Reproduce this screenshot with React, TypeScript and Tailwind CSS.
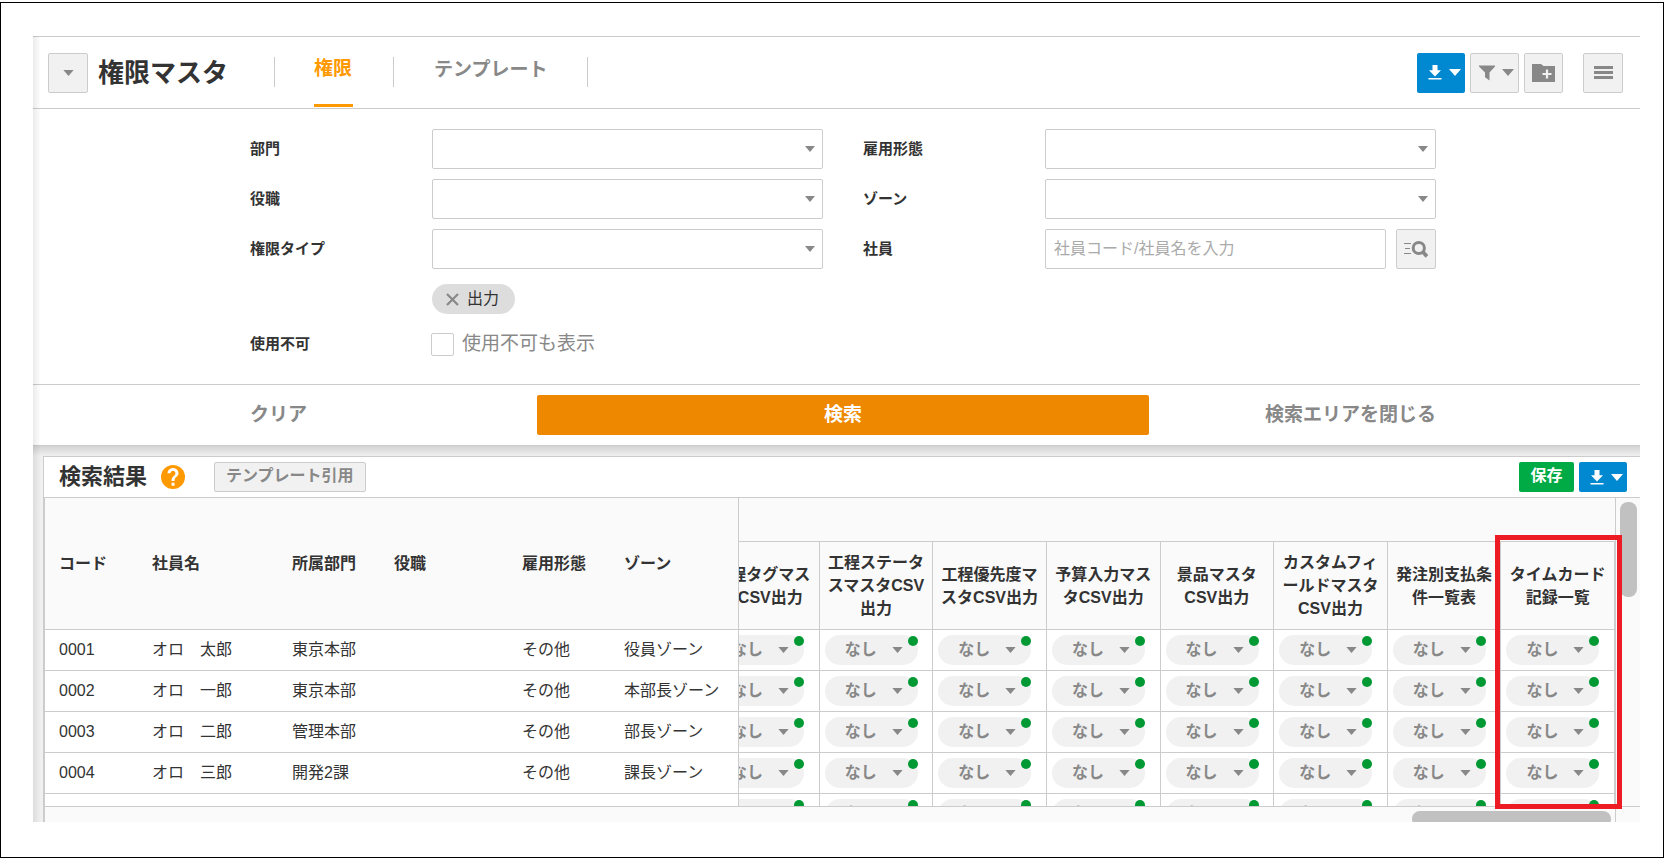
import React from 'react';

const line = 'border-[#cccccc]';

function Caret({ className = '' }: { className?: string }) {
  return (
    <svg viewBox="0 0 12 7" className={className} fill="currentColor" aria-hidden="true">
      <path d="M0 0h12L6 7z" />
    </svg>
  );
}

function DownloadIcon() {
  return (
    <svg viewBox="0 0 14 15" className="h-[15px] w-[14px]" fill="currentColor" aria-hidden="true">
      <path d="M4.5 0h5v5.2H13L7 11.5 1 5.2h3.5zM0.5 13h13v1.6h-13z" />
    </svg>
  );
}

function DownloadButton({ className }: { className: string }) {
  return (
    <button
      type="button"
      aria-label="ダウンロード"
      className={`flex w-12 items-center justify-center gap-[7px] rounded-[2px] bg-[#0088d0] pl-1.5 text-white ${className}`}
    >
      <DownloadIcon />
      <Caret className="h-[7px] w-3" />
    </button>
  );
}

function Field({ id, label, children }: { id: string; label: string; children: React.ReactNode }) {
  return (
    <div className="flex items-center">
      <label htmlFor={id} className="w-[182px] shrink-0 text-[15px] leading-5 font-bold">
        {label}
      </label>
      <div className="flex min-w-0 flex-1 items-center gap-2.5">{children}</div>
    </div>
  );
}

function SelectField({ id, label }: { id: string; label: string }) {
  return (
    <Field id={id} label={label}>
      <div className="relative w-full">
        <select id={id} className={`block h-10 w-full appearance-none rounded-[2px] border ${line} bg-white px-2.5`}>
          <option value="" />
        </select>
        <Caret className="pointer-events-none absolute top-[17px] right-2 h-1.5 w-2.5 text-[#888888]" />
      </div>
    </Field>
  );
}

const employeeColumns = [
  { name: 'コード', width: 'w-[93px]' },
  { name: '社員名', width: 'w-[140px]' },
  { name: '所属部門', width: 'w-[102px]' },
  { name: '役職', width: 'w-[128px]' },
  { name: '雇用形態', width: 'w-[102px]' },
  { name: 'ゾーン', width: 'w-[129px]' },
];

const employees = [
  ['0001', 'オロ　太郎', '東京本部', '', 'その他', '役員ゾーン'],
  ['0002', 'オロ　一郎', '東京本部', '', 'その他', '本部長ゾーン'],
  ['0003', 'オロ　二郎', '管理本部', '', 'その他', '部長ゾーン'],
  ['0004', 'オロ　三郎', '開発2課', '', 'その他', '課長ゾーン'],
  ['', '', '', '', '', ''],
];

const permissionColumns = [
  '工程タグマス\nタCSV出力',
  '工程ステータ\nスマスタCSV\n出力',
  '工程優先度マ\nスタCSV出力',
  '予算入力マス\nタCSV出力',
  '景品マスタ\nCSV出力',
  'カスタムフィ\nールドマスタ\nCSV出力',
  '発注別支払条\n件一覧表',
  'タイムカード\n記録一覧',
];

function PermissionSelect({ label }: { label: string }) {
  return (
    <div className="relative ml-[5px] h-[30px] w-[93px]">
      <select
        aria-label={label}
        className="block h-[30px] w-full appearance-none rounded-full bg-[#f1f1f1] pl-5 text-[16px] leading-[30px] font-bold text-[#888888]"
      >
        <option>なし</option>
      </select>
      <Caret className="pointer-events-none absolute top-3 right-[15px] h-1.5 w-[11px] text-[#888888]" />
      <span className="pointer-events-none absolute top-px right-0 size-2.5 rounded-full bg-[#009933]" />
    </div>
  );
}

function Header() {
  const tool = `flex h-10 items-center justify-center rounded-[2px] border ${line} bg-[#f1f1f1] text-[#888888]`;
  return (
    <header className={`flex h-[73px] items-center border-t border-b ${line} pr-[17px] pl-[15px]`}>
      <button type="button" aria-label="メニュー切替" className={`${tool} w-10`}>
        <Caret className="h-1.5 w-[11px]" />
      </button>
      <h1 className="ml-2.5 w-44 text-[26px] leading-9 font-bold">権限マスタ</h1>
      <nav className="flex items-center self-start text-[19px] leading-6 font-bold">
        <span className="h-[30px] w-px bg-[#cccccc]" />
        <a href="#permission" className="mr-10 ml-[39px] flex h-[70px] w-[39px] flex-col justify-between text-[#ff9900]">
          <span className="pt-5">権限</span>
          <span className="h-[3px] bg-[#ff9900]" />
        </a>
        <span className="h-[30px] w-px bg-[#cccccc]" />
        <a href="#template" className="mx-10 flex h-[70px] flex-col pt-[21px] text-[#888888]">
          テンプレート
        </a>
        <span className="h-[30px] w-px bg-[#cccccc]" />
      </nav>
      <div className="ml-auto flex gap-[5px]">
        <DownloadButton className="h-10" />
        <button type="button" aria-label="絞り込み" className={`${tool} w-[49px] gap-[7px] pl-1`}>
          <svg viewBox="0 0 16 16" className="size-4" fill="currentColor" aria-hidden="true">
            <path d="M0 .5h16v1L10.500 7.500V15.500l-4.500-3.200V7.500L0 1.500z" />
          </svg>
          <Caret className="h-[7px] w-3" />
        </button>
        <button type="button" aria-label="フォルダ追加" className={`${tool} w-[39px]`}>
          <svg viewBox="0 0 23 18" className="h-[18px] w-[23px]" aria-hidden="true">
            <path d="M0 0h9l2.500 2H23v16H0z" fill="currentColor" />
            <path d="M15 5.500v9M10.500 10h9" stroke="#f1f1f1" strokeWidth="2.200" />
          </svg>
        </button>
        <button type="button" aria-label="メニュー" className={`${tool} ml-[15px] w-10`}>
          <svg viewBox="0 0 19 13" className="h-[13px] w-[19px]" fill="currentColor" aria-hidden="true">
            <path d="M0 0h19v3H0zM0 5h19v3H0zM0 10h19v3H0z" />
          </svg>
        </button>
      </div>
    </header>
  );
}

function SearchArea() {
  return (
    <form onSubmit={(e) => e.preventDefault()}>
      <div className="mx-auto flex max-w-[1201px] gap-10 pt-5 pr-px pb-6 pl-3.5">
        <div className="flex flex-1 flex-col gap-2.5">
          <SelectField id="dept" label="部門" />
          <SelectField id="role" label="役職" />
          <SelectField id="type" label="権限タイプ" />
          <div className="mt-[5px] ml-[182px] flex">
            <button
              type="button"
              className="flex h-[30px] w-[83px] items-center gap-2 rounded-full bg-[#dddddd] pl-3.5 text-[16px] leading-[30px]"
            >
              <svg viewBox="0 0 13 13" className="size-[13px]" stroke="#888888" strokeWidth="2.200" aria-hidden="true">
                <path d="M1 1l11 11M12 1L1 12" />
              </svg>
              出力
            </button>
          </div>
          <div className="mt-1 flex h-8 items-center">
            <span className="w-[181px] shrink-0 text-[15px] leading-5 font-bold">使用不可</span>
            <label className="flex items-center gap-2 text-[19px] leading-6 text-[#888888]">
              <input type="checkbox" className={`size-[23px] appearance-none rounded-[2px] border ${line} bg-white`} />
              使用不可も表示
            </label>
          </div>
        </div>
        <div className="flex flex-1 flex-col gap-2.5">
          <SelectField id="employment" label="雇用形態" />
          <SelectField id="zone" label="ゾーン" />
          <Field id="employee" label="社員">
            <input
              id="employee"
              type="text"
              placeholder="社員コード/社員名を入力"
              className={`h-10 min-w-0 flex-1 rounded-[2px] border ${line} px-2 text-[16px] placeholder:text-[#aaaaaa]`}
            />
            <button
              type="button"
              aria-label="社員検索"
              className={`flex size-10 items-center justify-center rounded-[2px] border ${line} bg-[#f1f1f1] text-[#888888]`}
            >
              <svg viewBox="0 0 24 18" className="h-[18px] w-6" fill="none" stroke="currentColor" aria-hidden="true">
                <path d="M0 3.500h7M1 8.500h5M0 13.500h7" strokeWidth="1.200" />
                <circle cx="14.800" cy="8" r="5.600" strokeWidth="3" />
                <path d="M18.500 11.500l4.500 5" strokeWidth="3.800" />
              </svg>
            </button>
          </Field>
        </div>
      </div>
      <div className={`border-t ${line} py-2.5`}>
        <div className="mx-auto grid max-w-[1201px] grid-cols-[1fr_612px_1fr] items-center pr-px pl-3.5 text-[19px] leading-10 font-bold">
          <button type="reset" className="h-10 justify-self-start pb-1 text-[#888888]">
            クリア
          </button>
          <button type="submit" className="h-10 rounded-[2px] bg-[#ee8800] pb-1 text-white">
            検索
          </button>
          <button type="button" className="h-10 justify-self-end pb-1 text-[#888888]">
            検索エリアを閉じる
          </button>
        </div>
      </div>
    </form>
  );
}

function ResultGrid() {
  return (
    <div className={`relative border-l ${line} bg-[#fafafa]`}>
      <div className="flex">
        <div className="min-w-0 flex-1">
          <div className={`flex h-[309px] overflow-hidden border-r border-b ${line}`}>
            <table className="w-[694px] shrink-0 table-fixed border-separate border-spacing-0 self-start text-left text-[16px] leading-6">
              <thead>
                <tr className="h-[132px]">
                  {employeeColumns.map((c, i) => (
                    <th
                      key={c.name}
                      className={`${c.width} border-b ${line} py-0 pl-3.5 font-bold whitespace-nowrap ${i === 5 ? 'border-r' : ''}`}
                    >
                      {c.name}
                    </th>
                  ))}
                </tr>
              </thead>
              <tbody className="bg-white">
                {employees.map((row, r) => (
                  <tr key={r} className="h-[41px]">
                    {row.map((cell, i) => (
                      <td
                        key={i}
                        className={`border-b ${line} py-0 pl-3.5 whitespace-nowrap ${i === 5 ? 'border-r' : ''}`}
                      >
                        {cell}
                      </td>
                    ))}
                  </tr>
                ))}
              </tbody>
            </table>
            <div className="flex min-w-0 flex-1 justify-end overflow-hidden">
              <table className="w-[909px] shrink-0 table-fixed border-separate border-spacing-0 self-start text-[16px]">
                <thead>
                  <tr className="h-11">
                    <th colSpan={8} className={`border-b ${line}`} />
                  </tr>
                  <tr className="h-[88px]">
                    {permissionColumns.map((name) => (
                      <th
                        key={name}
                        className={`border-r border-b ${line} p-0 text-center leading-[23px] font-bold whitespace-pre`}
                      >
                        {name}
                      </th>
                    ))}
                  </tr>
                </thead>
                <tbody className="bg-white">
                  {employees.map((row, r) => (
                    <tr key={r} className="h-[41px]">
                      {permissionColumns.map((name) => (
                        <td key={name} className={`border-r border-b ${line} p-0`}>
                          <PermissionSelect label={`${row[0]} ${name}`} />
                        </td>
                      ))}
                    </tr>
                  ))}
                </tbody>
              </table>
            </div>
          </div>
          <div className={`flex h-[15px] justify-end overflow-hidden border-r ${line} pt-1 pr-1`}>
            <div className="h-4 w-[199px] shrink-0 rounded-lg bg-[#c1c1c1]" />
          </div>
        </div>
        <div className="w-6 shrink-0">
          <div className={`h-[309px] border-b ${line} pt-1 pl-1`}>
            <div className="h-[95px] w-[17px] rounded-lg bg-[#c1c1c1]" />
          </div>
        </div>
      </div>
      <div className="pointer-events-none absolute top-[37px] right-[18px] h-[274px] w-[127px] border-5 border-[#ed1c24]" />
    </div>
  );
}

function Results() {
  return (
    <section className={`bg-[#f0f0f0] bg-linear-to-b from-[#d4d4d4] to-[#f0f0f0] to-[10px] border-t ${line} pt-2.5 pl-2.5`}>
      <div className={`border-t border-l ${line} bg-white`}>
        <div className={`flex h-[41px] items-center border-b ${line} pr-[13px] pl-[15px]`}>
          <h2 className="text-[22px] leading-8 font-bold">検索結果</h2>
          <svg viewBox="2 2 20 20" className="ml-3.5 size-6" fill="#ff9900" aria-label="ヘルプ">
            <circle cx="12" cy="12" r="10" />
            <path
              fill="#ffffff"
              d="M13.300 19.200h-2.500v-2.500h2.500zM15.600 11.200l-1.100 1.100c-.85.900-1.200 1.500-1.200 3.100h-2.500v-.6c0-1.200.45-2.200 1.200-3l1.400-1.450c.45-.4.650-.9.650-1.500 0-1.150-.9-2-2.050-2s-2.050.85-2.050 2H7.500c0-2.450 2-4.350 4.500-4.350s4.600 1.900 4.600 4.350c0 .95-.4 1.750-1 2.350z"
            />
          </svg>
          <button
            type="button"
            className={`ml-[29px] h-[30px] rounded-[2px] border ${line} bg-[#f1f1f1] px-[11px] pb-0.5 text-[16px] leading-6 font-bold text-[#888888]`}
          >
            テンプレート引用
          </button>
          <div className="ml-auto flex gap-[5px]">
            <button type="button" className="h-[30px] w-[55px] rounded-[2px] bg-[#00aa44] pb-0.5 text-[16px] leading-6 font-bold text-white">
              保存
            </button>
            <DownloadButton className="h-[30px]" />
          </div>
        </div>
        <ResultGrid />
      </div>
    </section>
  );
}

export default function App() {
  return (
    <div
      lang="ja"
      className="bg-white pt-0.5 pr-1 font-['Liberation_Sans','Noto_Sans_CJK_JP',sans-serif] text-[#333333]"
    >
      <div className="border border-black pt-[33px] pr-[23px] pb-[35px] pl-8">
        <main className="relative">
          <Header />
          <SearchArea />
          <Results />
          <div className="pointer-events-none absolute inset-y-0 left-0 w-2 bg-linear-to-r from-black/8 to-transparent" />
        </main>
      </div>
    </div>
  );
}
